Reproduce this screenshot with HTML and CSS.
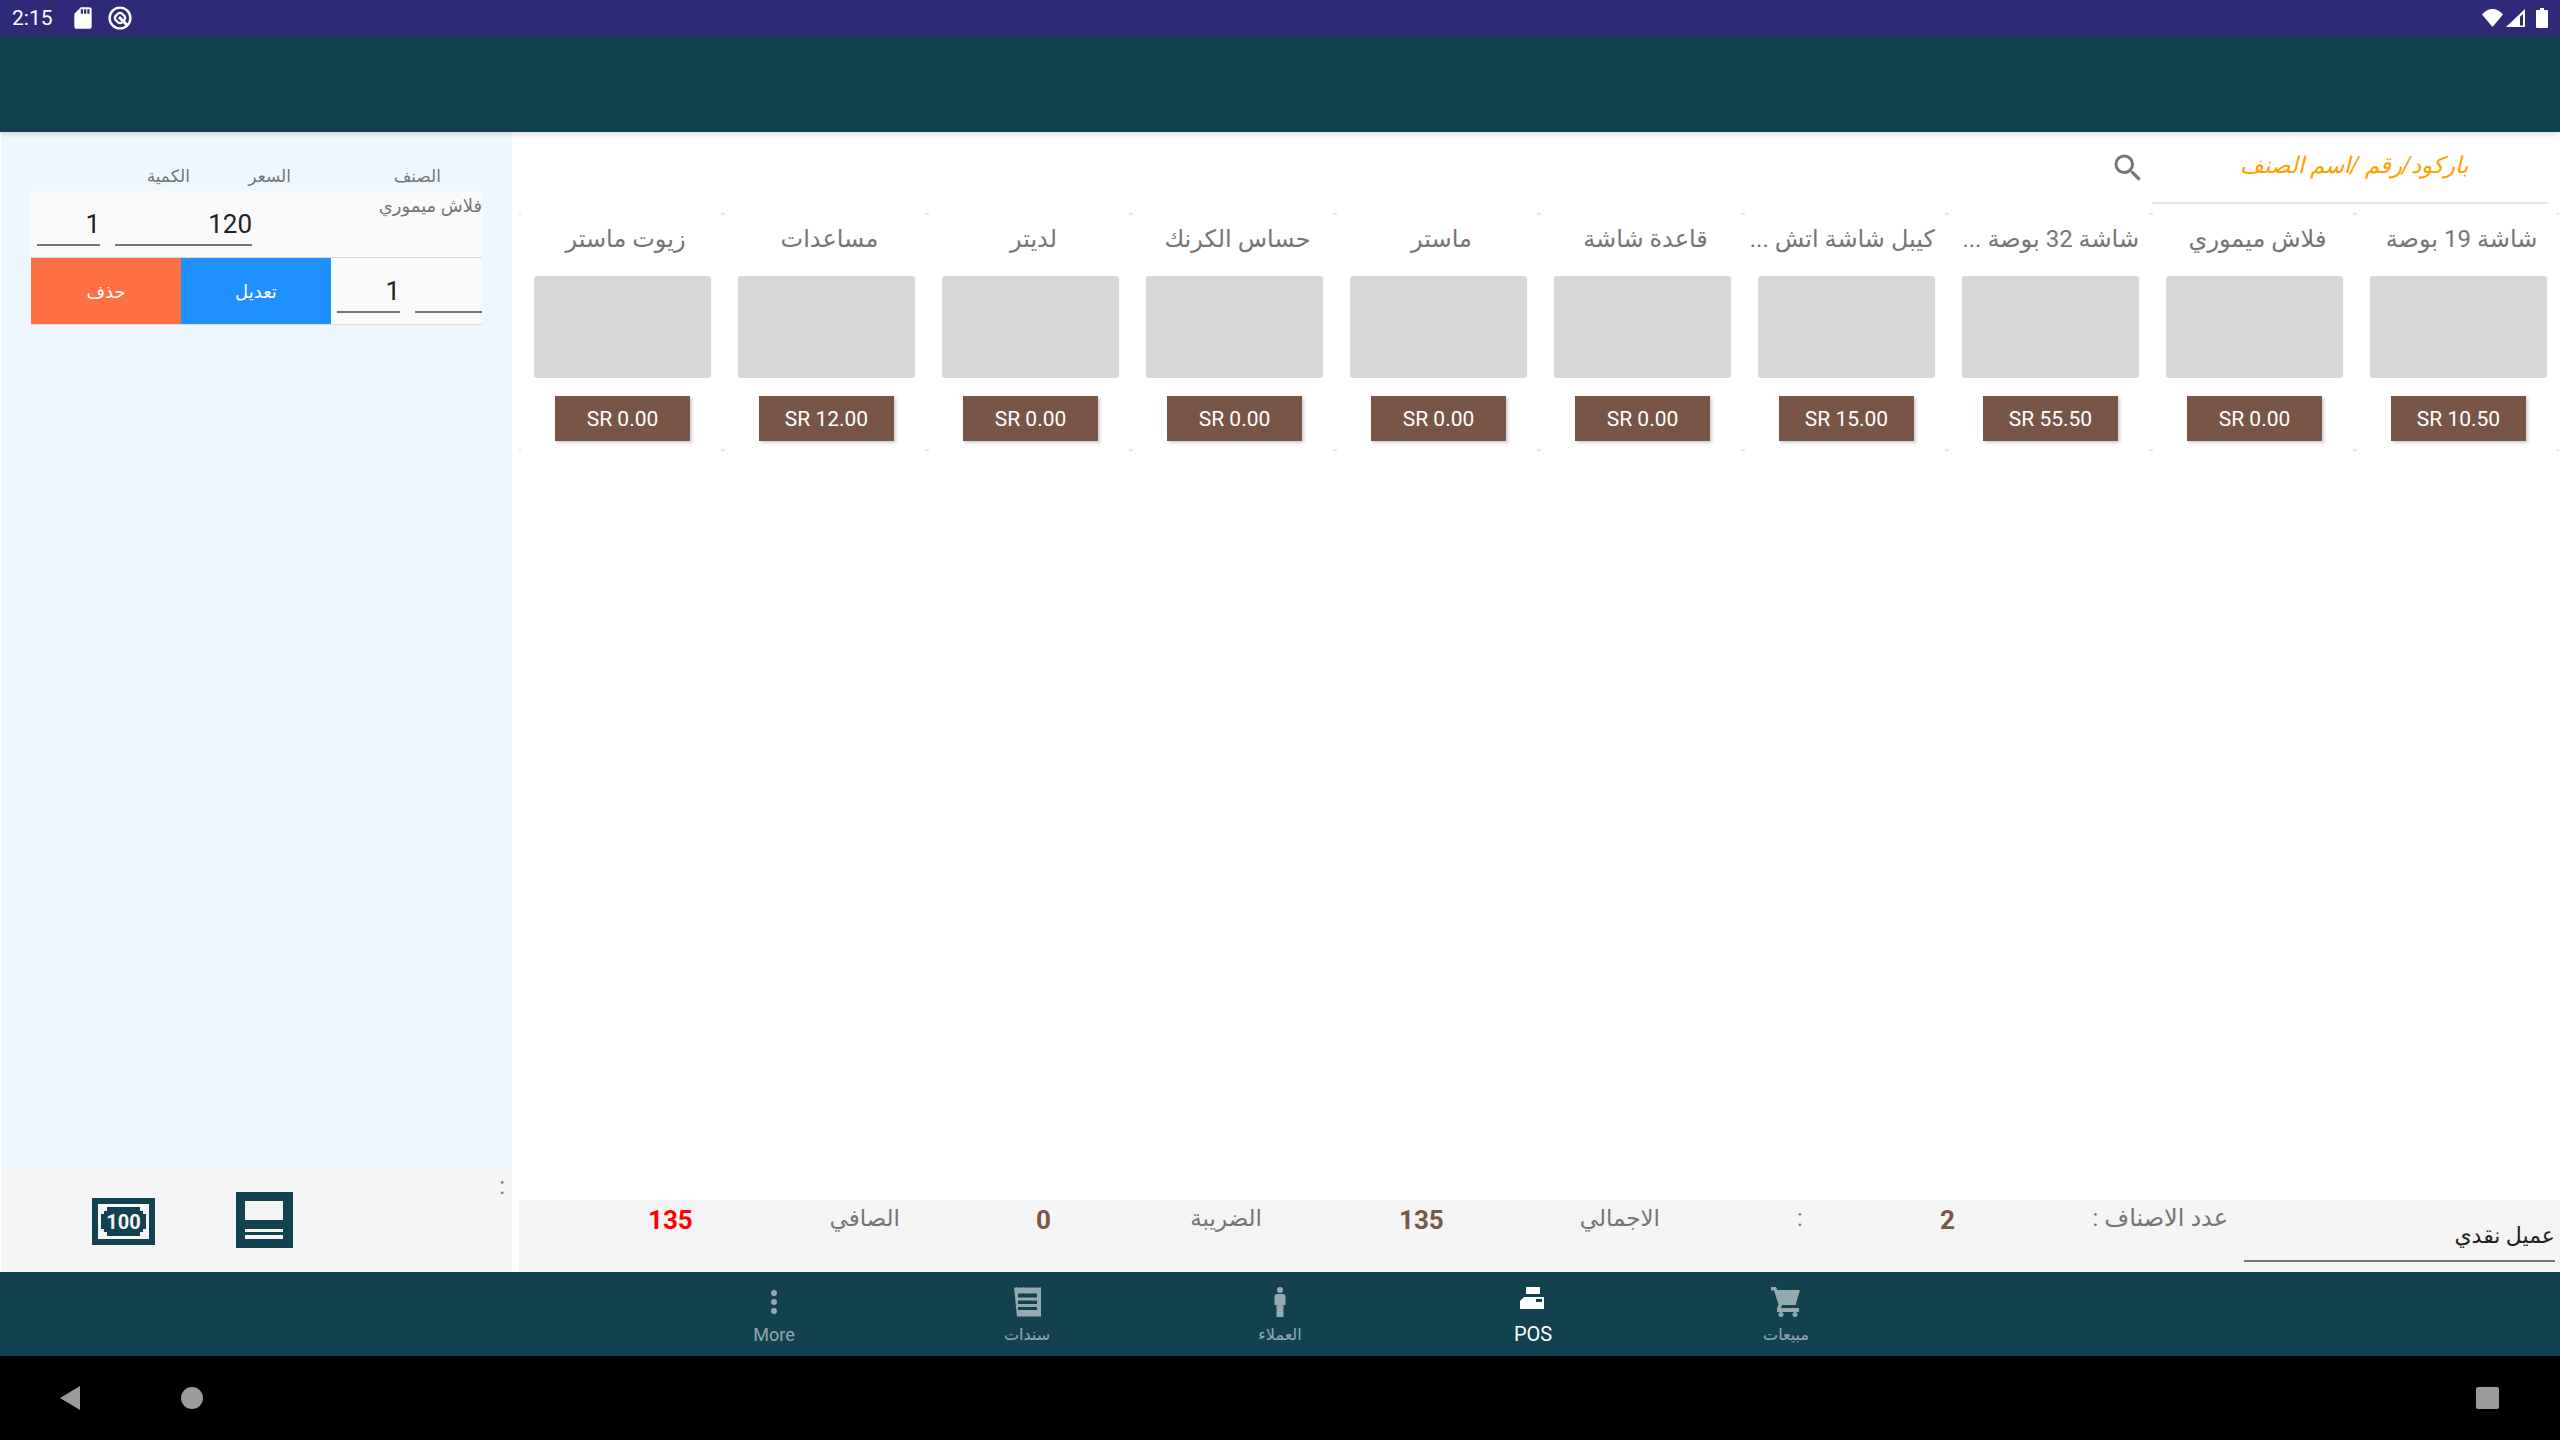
FILE: index.html
```html
<!DOCTYPE html>
<html lang="ar">
<head>
  <meta charset="UTF-8">
  <title>POS</title>
  <link rel="stylesheet" href="styles.css">
</head>
<body>
  <div class="status-bar">
    <span class="clock">2:15</span>
    <svg class="sd-icon" viewBox="0 0 24 24"><path d="M18 2h-8L4.020 8 4 20c0 1.100.9 2 2 2h12c1.100 0 2-.9 2-2V4c0-1.100-.9-2-2-2zm-6 6h-2V4h2v4zm3 0h-2V4h2v4zm3 0h-2V4h2v4z"/></svg>
    <svg class="q-icon" viewBox="0 0 24 24"><circle cx="12" cy="12" r="10.400" fill="none" stroke="#fff" stroke-width="2.400"/><rect x="7.500" y="7.500" width="9" height="9" rx="3" transform="rotate(45 12 12)" fill="none" stroke="#fff" stroke-width="2.400"/><path d="M11 11l8.500 8.500" stroke="#fff" stroke-width="3"/></svg>
    <span class="status-right">
      <svg class="wifi-icon" viewBox="0 0 21 18"><path d="M0 5.500C3 2 6.500 0 10.500 0S18 2 21 5.500L10.500 18z"/></svg>
      <svg class="signal-icon" viewBox="0 0 19 18"><path d="M0 18 19 0v18zM14 16.500h3V5l-3 2.800z" fill-rule="evenodd"/></svg>
      <svg class="battery-icon" viewBox="0 0 12 20"><path d="M4 0h4v2h3a1 1 0 0 1 1 1v16a1 1 0 0 1-1 1H1a1 1 0 0 1-1-1V3a1 1 0 0 1 1-1h3z"/></svg>
    </span>
  </div>
  <div class="app-bar"></div>

  <div class="content">
    <div class="side-panel">
      <div class="cart">
        <div class="cart-head">
          <span class="col-name">الصنف</span>
          <span class="col-price">السعر</span>
          <span>الكمية</span>
        </div>
        <div class="cart-row">
          <span class="cart-name">فلاش ميموري</span>
          <div class="field price-field">120</div>
          <div class="field qty-field">1</div>
        </div>
        <div class="cart-row">
          <div class="field empty-field"></div>
          <div class="field qty-field">1</div>
          <button class="btn btn-edit">تعديل</button>
          <button class="btn btn-delete">حذف</button>
        </div>
      </div>
      <div class="side-actions">
        <span class="side-colon">:</span>
        <svg class="bill-icon" viewBox="0 0 63 47">
          <rect width="63" height="47" fill="#124250"/>
          <rect x="6" y="6" width="51" height="35" fill="#f5f5f5"/>
          <path d="M15 9h33v4h3v3h3v15h-3v3h-3v4H15v-4h-3v-3H9V16h3v-3h3z" fill="#124250"/>
          <text x="31.500" y="30.500" class="bill-text">100</text>
        </svg>
        <svg class="receipt-icon" viewBox="0 0 57 56">
          <rect width="57" height="56" fill="#124250"/>
          <rect x="9" y="9" width="38" height="19" fill="#f5f5f5"/>
          <rect x="9" y="37" width="38" height="3" fill="#f5f5f5"/>
          <rect x="9" y="43" width="38" height="4" fill="#f5f5f5"/>
        </svg>
      </div>
    </div>

    <div class="main">
      <div class="search-row">
        <svg class="search-icon" viewBox="0 0 24 24"><path d="M15.500 14h-.79l-.28-.27A6.470 6.470 0 0 0 16 9.500 6.500 6.500 0 1 0 9.500 16c1.610 0 3.090-.59 4.230-1.570l.27.28v.79l5 4.990L20.490 19l-4.990-5zm-6 0C7.010 14 5 11.990 5 9.500S7.010 5 9.500 5 14 7.010 14 9.500 11.990 14 9.500 14z"/></svg>
        <div class="search-box"><span class="search-hint">باركود/رقم /اسم الصنف</span></div>
      </div>

      <div class="grid">
        <div class="cell"><div class="cell-title">شاشة 19 بوصة</div><div class="thumb"></div><div class="price">SR 10.50</div></div>
        <div class="cell"><div class="cell-title">فلاش ميموري</div><div class="thumb"></div><div class="price">SR 0.00</div></div>
        <div class="cell"><div class="cell-title">شاشة 32 بوصة ...</div><div class="thumb"></div><div class="price">SR 55.50</div></div>
        <div class="cell"><div class="cell-title">كيبل شاشة اتش ...</div><div class="thumb"></div><div class="price">SR 15.00</div></div>
        <div class="cell"><div class="cell-title">قاعدة شاشة</div><div class="thumb"></div><div class="price">SR 0.00</div></div>
        <div class="cell"><div class="cell-title">ماستر</div><div class="thumb"></div><div class="price">SR 0.00</div></div>
        <div class="cell"><div class="cell-title">حساس الكرنك</div><div class="thumb"></div><div class="price">SR 0.00</div></div>
        <div class="cell"><div class="cell-title">لديتر</div><div class="thumb"></div><div class="price">SR 0.00</div></div>
        <div class="cell"><div class="cell-title">مساعدات</div><div class="thumb"></div><div class="price">SR 12.00</div></div>
        <div class="cell"><div class="cell-title">زيوت ماستر</div><div class="thumb"></div><div class="price">SR 0.00</div></div>
      </div>

      <div class="totals">
        <div class="customer"><span>عميل نقدي</span></div>
        <div class="total-label t-count">عدد الاصناف :</div>
        <div class="total-value t-count-val">2</div>
        <div class="total-label t-colon">:</div>
        <div class="total-value t-sum-val">135</div>
        <div class="total-label t-sum">الاجمالي</div>
        <div class="total-value t-tax-val">0</div>
        <div class="total-label t-tax">الضريبة</div>
        <div class="total-value t-net-val">135</div>
        <div class="total-label t-net">الصافي</div>
      </div>
    </div>
  </div>

  <div class="bottom-nav">
    <div class="nav-item">
      <svg class="nav-icon" viewBox="0 0 30 30"><path d="M0 0h5l1.500 3H29l-4.500 15H11l-1 3h18v4H6v-4l1.500-3.500L3 3.500H0z"/><circle cx="10" cy="27.500" r="2.500"/><circle cx="24" cy="27.500" r="2.500"/></svg>
      <span class="nav-label">مبيعات</span>
    </div>
    <div class="nav-item active">
      <svg class="nav-icon" viewBox="0 0 30 30"><path fill-rule="evenodd" d="M8 0h14v7H8zM6 10h20v12H2V14zM18 12v3h6v-3z"/></svg>
      <span class="nav-label nav-label-lat">POS</span>
    </div>
    <div class="nav-item">
      <svg class="nav-icon" viewBox="0 0 30 30"><circle cx="15" cy="3" r="3"/><path d="M11.500 7h7a2 2 0 0 1 2 2v9h-2v12h-7V18h-2V9a2 2 0 0 1 2-2z"/></svg>
      <span class="nav-label">العملاء</span>
    </div>
    <div class="nav-item">
      <svg class="nav-icon" viewBox="0 0 30 30"><path fill-rule="evenodd" d="M2 0l1.500 1L5 0l1.500 1L8 0l1.500 1L11 0l1.500 1L14 0l1.500 1L17 0l1.500 1L20 0l1.500 1L23 0l1.500 1L26 0l1.500 1L29 0v30l-1.500-1-1.500 1-1.500-1-1.500 1-1.500-1-1.500 1-1.500-1-1.500 1-1.500-1-1.500 1-1.500-1-1.500 1-1.500-1-1.500 1-1.500-1-1.500 1zM6 6.500v4h19v-4zM6 13.500v3.500h19v-3.500zM6 20v3h19v-3z"/></svg>
      <span class="nav-label">سندات</span>
    </div>
    <div class="nav-item">
      <svg class="nav-icon" viewBox="0 0 30 30"><circle cx="15" cy="6" r="3"/><circle cx="15" cy="15" r="3"/><circle cx="15" cy="24" r="3"/></svg>
      <span class="nav-label nav-label-lat more-label">More</span>
    </div>
  </div>

  <div class="sys-nav">
    <div class="sys-left">
      <svg class="sys-back" viewBox="0 0 20 24"><path d="M20 0v24L0 12z"/></svg>
      <div class="sys-home"></div>
    </div>
    <div class="sys-recent"></div>
  </div>
</body>
</html>
```

FILE: styles.css
```css
* {
  box-sizing: border-box;
}
html, body {
  margin: 0;
  padding: 0;
}
body {
  width: 2560px;
  height: 1440px;
  display: flex;
  flex-direction: column;
  overflow: hidden;
  background-color: #fff;
  font-family: Roboto, "DejaVu Sans", sans-serif;
  color: #757575;
}

/* status bar */
.status-bar {
  height: 36px;
  flex: none;
  display: flex;
  align-items: center;
  padding: 0 12px;
  background-color: #2f2a78;
  color: #fff;
}
.status-bar svg {
  fill: #fff;
  display: block;
}
.clock {
  font-size: 21px;
  width: 58px;
}
.sd-icon {
  width: 26px;
  height: 26px;
}
.q-icon {
  width: 24px;
  height: 24px;
  margin-left: 12px;
}
.status-right {
  margin-left: auto;
  display: flex;
  align-items: center;
}
.wifi-icon {
  width: 21px;
  height: 18px;
  margin-right: 3px;
}
.signal-icon {
  width: 19px;
  height: 18px;
  margin-right: 11px;
}
.battery-icon {
  width: 12px;
  height: 20px;
}

.app-bar {
  height: 96px;
  flex: none;
  background-color: #124250;
  box-shadow: 0 2px 5px rgba(0, 0, 0, 0.15);
  position: relative;
}

.content {
  flex: 1;
  display: flex;
  min-height: 0;
}

/* left panel */
.side-panel {
  width: 511px;
  margin-left: 1px;
  display: flex;
  flex-direction: column;
  background-color: #eff7fe;
}
.cart {
  flex: 1;
  padding: 33px 30px 0;
}
.cart-head {
  direction: rtl;
  display: flex;
  height: 26px;
  padding-right: 41px;
  font-size: 17px;
  line-height: 22px;
}
.col-name {
  width: 150px;
}
.col-price {
  width: 101px;
}
.cart-row {
  direction: rtl;
  display: flex;
  height: 67px;
  background-color: #fafafa;
  border-bottom: 1px solid #d8dbde;
}
.cart-name {
  flex: 1;
  font-size: 18px;
  line-height: 30px;
  white-space: nowrap;
}
.field {
  direction: ltr;
  height: 55px;
  line-height: 66px;
  text-align: right;
  font-size: 26px;
  color: #212121;
  border-bottom: 2px solid #757575;
  margin-left: 15px;
}
.price-field {
  width: 137px;
}
.qty-field {
  width: 63px;
  margin-left: 6px;
}
.empty-field {
  width: 67px;
}
.btn {
  width: 150px;
  height: 66px;
  border: none;
  padding: 0;
  color: #fff;
  font-family: inherit;
  font-size: 18px;
}
.btn-edit {
  background-color: #1e90ff;
}
.btn-delete {
  background-color: #ff7043;
}
.side-actions {
  position: relative;
  height: 105px;
  flex: none;
  display: flex;
  background-color: #f5f5f5;
}
.side-colon {
  position: absolute;
  right: 7px;
  top: 5px;
  font-size: 24px;
}
.bill-icon {
  width: 63px;
  height: 47px;
  margin: 31px 0 0 91px;
}
.bill-text {
  font-family: Roboto, sans-serif;
  font-weight: 700;
  font-size: 20px;
  fill: #f5f5f5;
  text-anchor: middle;
}
.receipt-icon {
  width: 57px;
  height: 56px;
  margin: 25px 0 0 81px;
}

/* main area */
.main {
  flex: 1;
  margin-left: 7px;
  display: flex;
  flex-direction: column;
  min-width: 0;
}
.search-row {
  display: flex;
  justify-content: flex-end;
  padding-right: 12px;
  height: 72px;
}
.search-icon {
  width: 36px;
  height: 36px;
  fill: #757575;
  margin: 18px 6px 0 0;
}
.search-box {
  width: 396px;
  border-bottom: 2px solid #e6e6e6;
  direction: rtl;
  padding: 20px 80px 0 0;
}
.search-hint {
  color: #ffa000;
  font-style: italic;
  font-size: 23px;
}
.grid {
  direction: rtl;
  display: flex;
  flex: 1;
  margin: 9px 1px 0 0;
  align-items: flex-start;
}
.cell {
  width: 204px;
  height: 238px;
  flex: none;
  padding: 0 12px 0 15px;
  background:
    linear-gradient(#e6e6e6, #e6e6e6) 0 0 / 2px 2px no-repeat,
    linear-gradient(#e6e6e6, #e6e6e6) 100% 0 / 2px 2px no-repeat,
    linear-gradient(#e6e6e6, #e6e6e6) 0 100% / 2px 2px no-repeat,
    linear-gradient(#e6e6e6, #e6e6e6) 100% 100% / 2px 2px no-repeat;
}
.cell-title {
  height: 63px;
  padding-left: 6px;
  line-height: 52px;
  text-align: center;
  font-size: 24px;
  white-space: nowrap;
}
.thumb {
  height: 102px;
  background-color: #d6d8d7;
  border-radius: 3px;
}
.price {
  direction: ltr;
  width: 135px;
  height: 45px;
  margin: 18px auto 0;
  background-color: #795548;
  color: #fff;
  font-size: 21px;
  line-height: 47px;
  text-align: center;
  box-shadow: 2px 2px 3px rgba(0, 0, 0, 0.2);
}

/* totals strip */
.totals {
  position: relative;
  height: 72px;
  flex: none;
  background-color: #f4f4f4;
}
.customer {
  position: absolute;
  top: 0;
  right: 5px;
  width: 311px;
  height: 62px;
  direction: rtl;
  border-bottom: 2px solid #757575;
  color: #212121;
  font-size: 22px;
  line-height: 72px;
}
.total-label,
.total-value {
  position: absolute;
  top: 0;
  line-height: 40px;
  white-space: nowrap;
}
.total-label {
  font-size: 23px;
  line-height: 37px;
  direction: rtl;
}
.total-value {
  font-size: 26px;
  font-weight: 700;
  color: #795548;
}
.t-count { right: 332px; font-size: 24px; }
.t-count-val { left: 1421px; }
.t-colon { left: 1278px; }
.t-sum-val { left: 880px; }
.t-sum { right: 900px; }
.t-tax-val { left: 517px; }
.t-tax { right: 1298px; }
.t-net-val { left: 129px; color: #f00; }
.t-net { right: 1660px; }

/* bottom nav */
.bottom-nav {
  height: 84px;
  flex: none;
  display: flex;
  justify-content: center;
  direction: rtl;
  background-color: #124250;
  color: rgba(255, 255, 255, 0.55);
}
.nav-item {
  width: 253px;
  display: flex;
  flex-direction: column;
  align-items: center;
  padding-top: 15px;
}
.nav-icon {
  width: 30px;
  height: 30px;
  fill: rgba(255, 255, 255, 0.55);
}
.nav-label {
  margin-top: 6px;
  font-size: 16px;
  line-height: 24px;
}
.nav-label-lat {
  margin-top: 5px;
  font-size: 20px;
}
.more-label {
  margin-top: 6px;
  font-size: 18px;
}
.active {
  color: #fff;
}
.active .nav-icon {
  fill: #fff;
}

/* android nav bar */
.sys-nav {
  height: 84px;
  flex: none;
  display: flex;
  align-items: center;
  justify-content: space-between;
  padding: 0 61px 0 60px;
  background-color: #000;
}
.sys-left {
  display: flex;
  align-items: center;
}
.sys-back {
  width: 20px;
  height: 24px;
  fill: #9b9b9b;
}
.sys-home {
  width: 22px;
  height: 22px;
  margin-left: 101px;
  border-radius: 50%;
  background-color: #9b9b9b;
}
.sys-recent {
  width: 23px;
  height: 22px;
  border-radius: 2px;
  background-color: #9b9b9b;
}
```
